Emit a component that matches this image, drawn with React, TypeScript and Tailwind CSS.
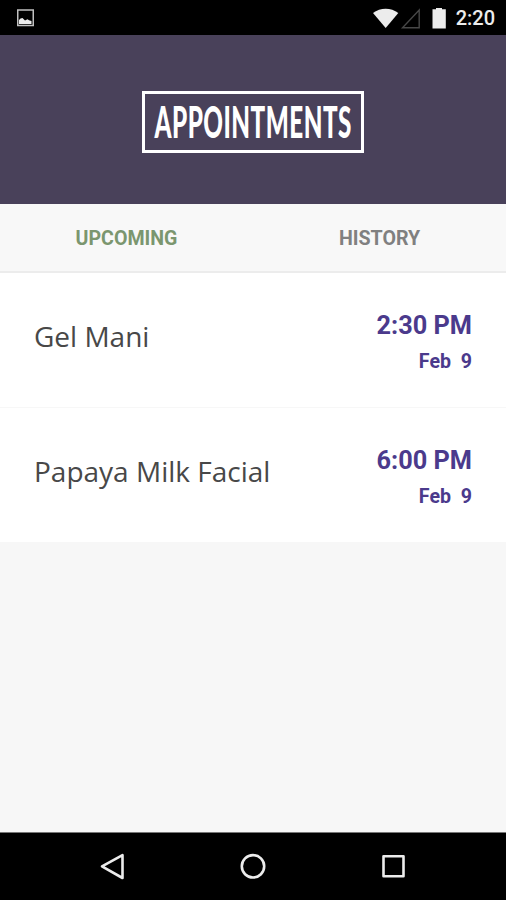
const appointments = [
  { name: 'Gel Mani', time: '2:30 PM', date: 'Feb\u00a0 9' },
  { name: 'Papaya Milk Facial', time: '6:00 PM', date: 'Feb\u00a0 9' },
];

function StatusBar() {
  return (
    <div className="flex h-[35px] shrink-0 items-center bg-black pl-[17px] pr-[11px] text-[#ececec]">
      <svg className="h-[18px] w-[17px]" viewBox="0 0 17 18" fill="none">
        <rect x="0.75" y="1" width="15.5" height="15.5" stroke="#c0c0c0" strokeWidth="1.5" />
        <path d="M2 15V11L3.5 9.5L5.5 9L8 11.5L10.5 10.3L12 11.3L14.5 12V15Z" fill="#ececec" />
      </svg>
      <svg className="ml-auto h-[22px] w-[74px]" viewBox="0 0 74 22">
        <path d="M0 6C7.3 0.3 18 0.3 25.3 6L12.7 21Z" fill="#ececec" />
        <path d="M46.2 3V20.8H29.5Z" fill="none" stroke="#484848" strokeWidth="1.4" />
        <path d="M59.5 2.2H63V1H69V2.2H72.8V21.4H59.5Z" fill="#ececec" />
      </svg>
      <span className="ml-[9px] mt-px text-[20px] font-medium leading-[35px]">2:20</span>
    </div>
  );
}

function NavigationBar() {
  return (
    <nav className="flex h-[68px] shrink-0 items-center justify-between border-t border-[#777] bg-black pl-[100px] pr-[100px]">
      <svg className="h-7 w-6" viewBox="0 0 24 28" fill="none" stroke="#ececec" strokeWidth="2.6" strokeLinejoin="round">
        <path d="M22.5 2.2V25L2 13.4Z" />
      </svg>
      <svg className="h-7 w-7" viewBox="0 0 28 28" fill="none" stroke="#ececec" strokeWidth="2.6">
        <circle cx="14" cy="13.3" r="11.2" />
      </svg>
      <svg className="h-7 w-6" viewBox="0 0 24 28" fill="none" stroke="#ececec" strokeWidth="2.6" strokeLinejoin="round">
        <rect x="1.5" y="3.2" width="20" height="20" />
      </svg>
    </nav>
  );
}

export default function App() {
  return (
    <div className="flex h-[900px] w-[506px] flex-col overflow-hidden bg-[#f7f7f7] font-['Roboto',sans-serif]">
      <StatusBar />
      <header className="flex h-[169px] shrink-0 items-center justify-center bg-[#49415a] pt-[5px]">
        <div className="flex h-[62px] w-[222px] items-center justify-center border-[3px] border-white pb-[3px]">
          <h1 className="scale-x-[0.545] whitespace-nowrap font-['Lato',sans-serif] text-[44.5px] font-black leading-[53px] tracking-[0.9px] text-white">
            APPOINTMENTS
          </h1>
        </div>
      </header>
      <div className="grid h-[69px] shrink-0 grid-cols-2 border-b-2 border-[#ececec] bg-[#f8f8f8] pt-0.5 text-center text-[19.6px] font-bold leading-[66px]">
        <button className="text-[#7b966f]">UPCOMING</button>
        <button className="text-[#808080]">HISTORY</button>
      </div>
      <ul className="grow">
        {appointments.map((item) => (
          <li
            key={item.name}
            className="flex h-[135px] justify-between border-b border-[#f7f7f7] bg-white px-[34px] pt-[35px]"
          >
            <span className="font-['Open_Sans',sans-serif] text-[28px] leading-[56px] text-[#484848]">{item.name}</span>
            <div className="text-right font-bold text-[#4b3a8c]">
              <div className="text-[25.3px] leading-[36px]">{item.time}</div>
              <div className="text-[19.6px] leading-[35px]">{item.date}</div>
            </div>
          </li>
        ))}
      </ul>
      <NavigationBar />
    </div>
  );
}
